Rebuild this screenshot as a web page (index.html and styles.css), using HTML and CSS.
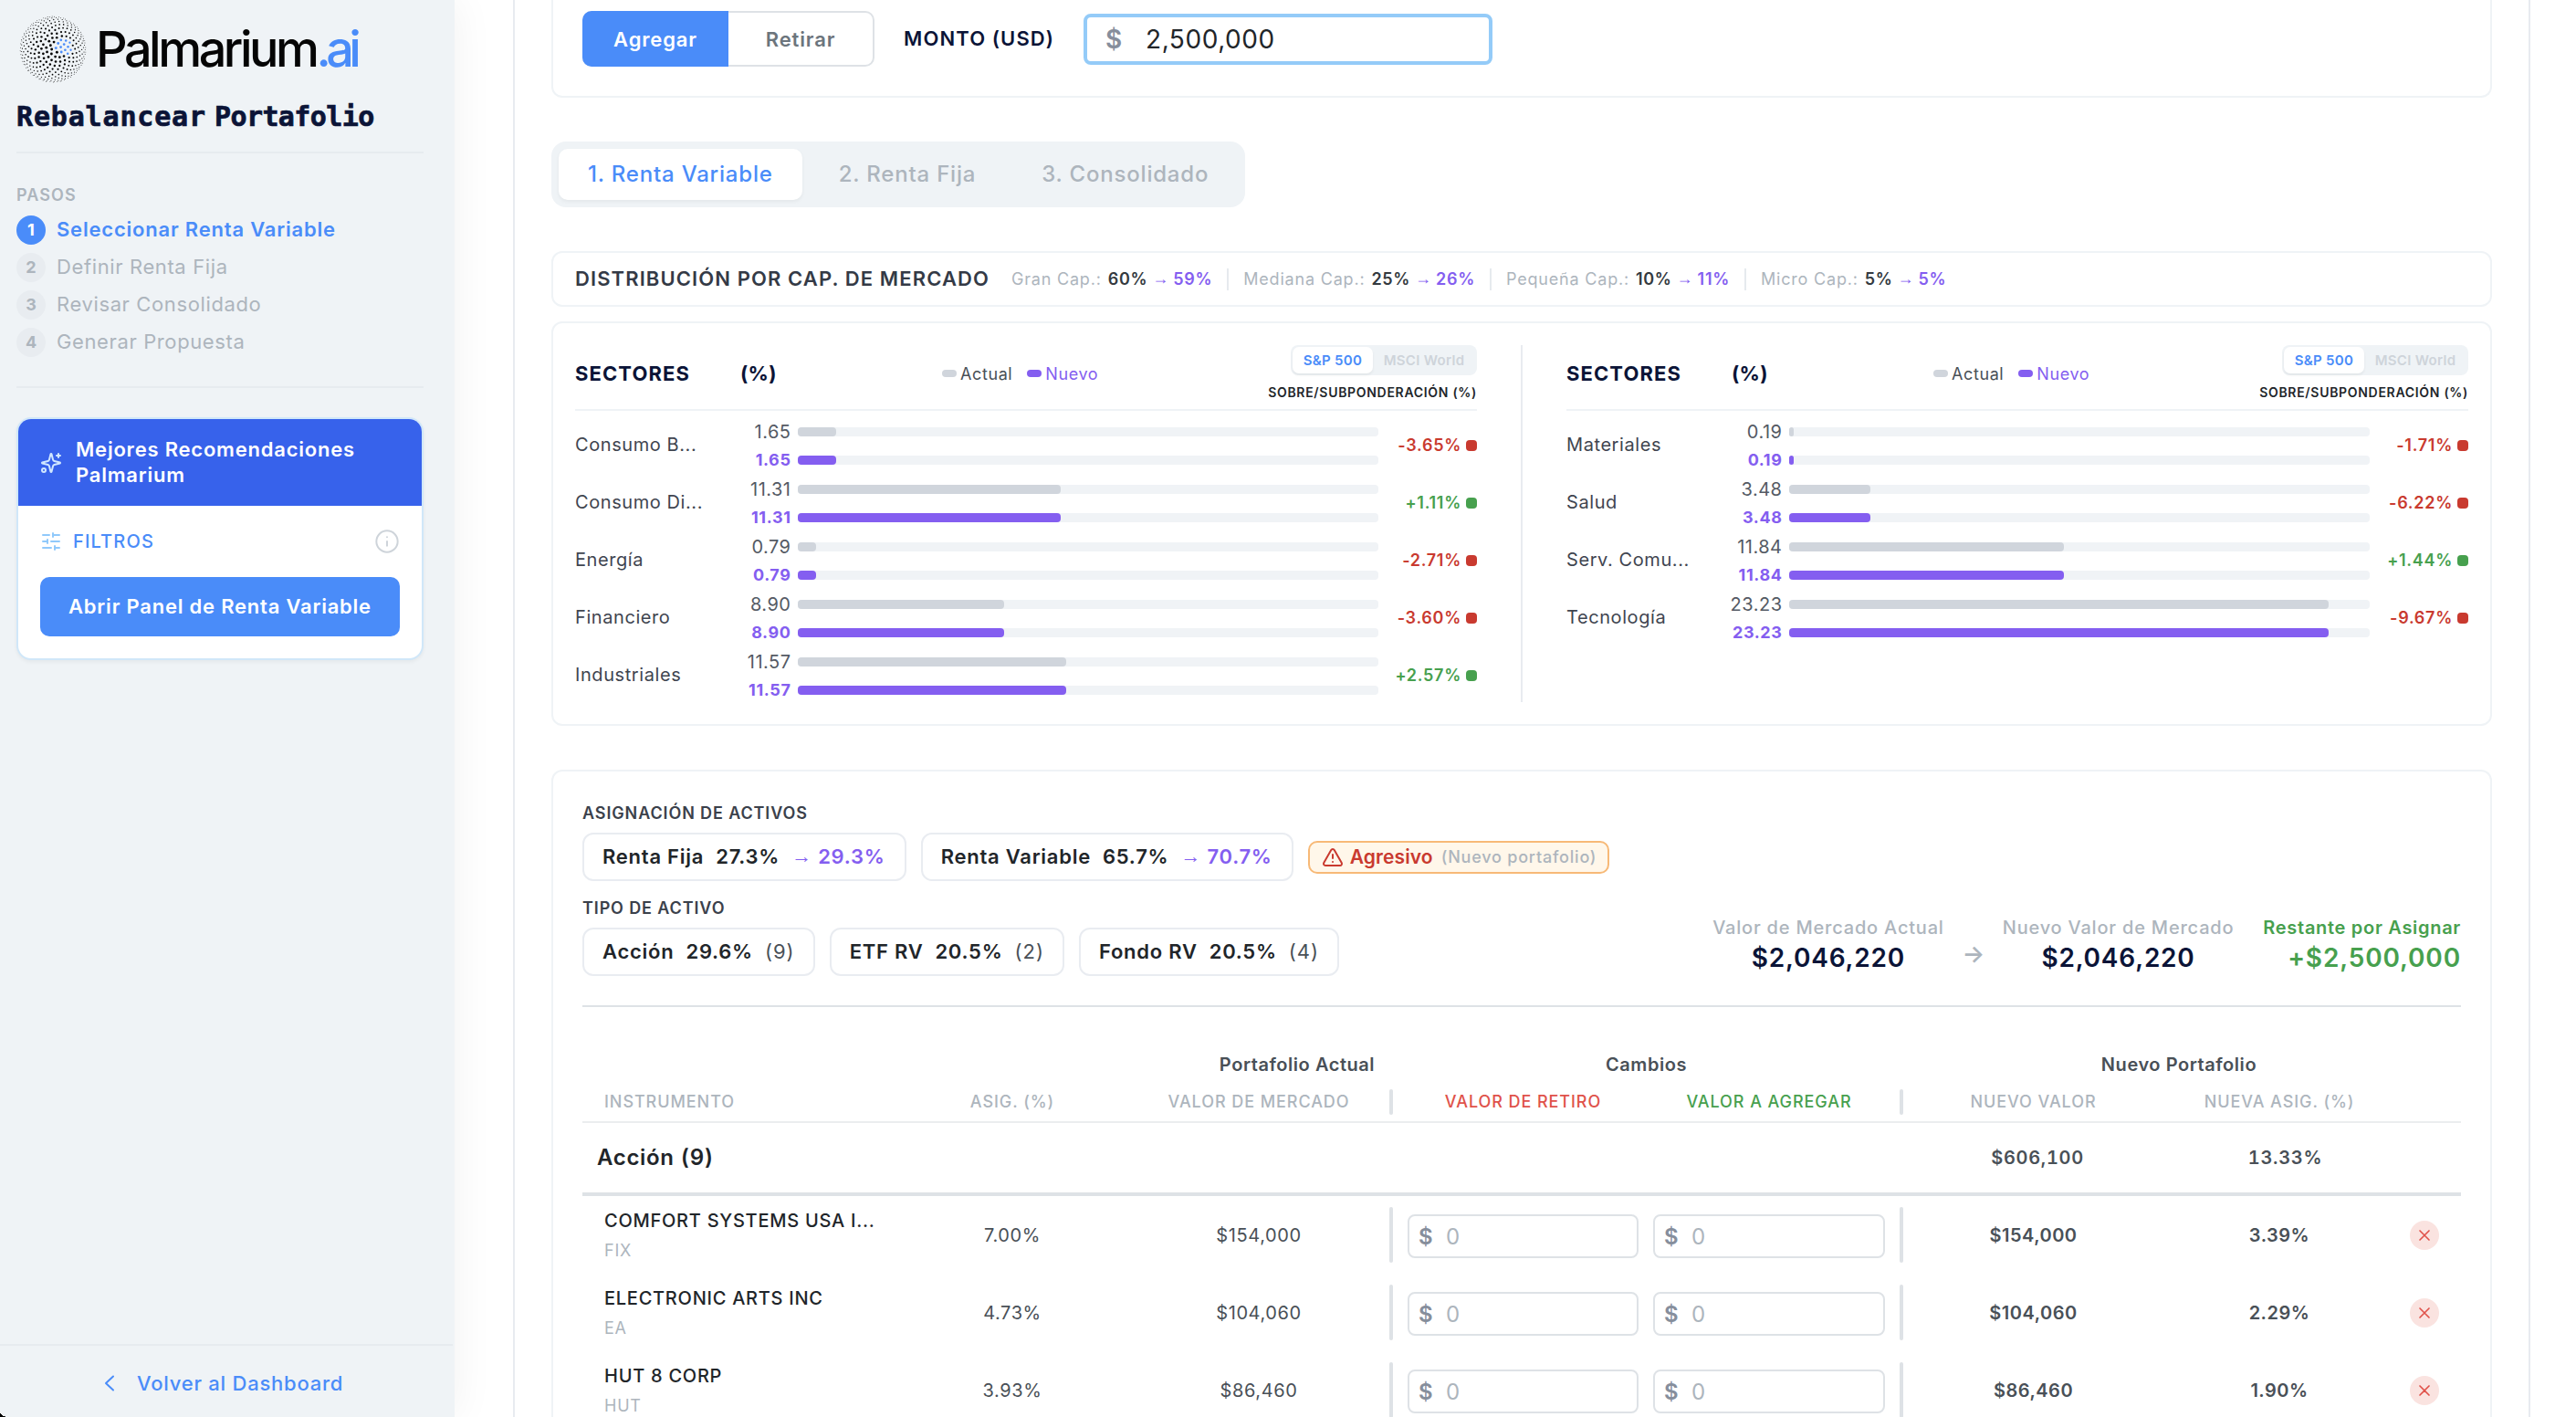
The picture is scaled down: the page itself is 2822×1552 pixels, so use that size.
FILE: index.html
```html
<!DOCTYPE html>
<html lang="es">
<head>
<meta charset="utf-8">
<title>Rebalancear Portafolio</title>
<link rel="stylesheet" href="styles.css">
</head>
<body>
<svg class="sprite" aria-hidden="true">
  <symbol id="i-x" viewBox="0 0 24 24"><path d="M18 6 6 18M6 6l12 12"/></symbol>
</svg>
<div class="app">
  <aside class="sidebar">
    <div class="logo">
      <svg id="sphere" class="sphere" viewBox="-37 -37 74 74"></svg>
      <span class="brand">Palmarium<span class="brand-ai">.ai</span></span>
    </div>
    <h1 class="title"><span class="w1">Rebalancear</span><span class="w2">Portafolio</span></h1>
    <section class="steps">
      <h2 class="steps-title">PASOS</h2>
      <div class="step active"><span class="num">1</span>Seleccionar Renta Variable</div>
      <div class="step"><span class="num">2</span>Definir Renta Fija</div>
      <div class="step"><span class="num">3</span>Revisar Consolidado</div>
      <div class="step"><span class="num">4</span>Generar Propuesta</div>
    </section>
    <section class="reco">
      <div class="reco-head">
        <svg class="icon" viewBox="0 0 24 24"><path d="M9.937 15.5A2 2 0 0 0 8.5 14.063l-6.135-1.582a.5.5 0 0 1 0-.962L8.5 9.936A2 2 0 0 0 9.937 8.5l1.582-6.135a.5.5 0 0 1 .963 0L14.063 8.5A2 2 0 0 0 15.5 9.937l6.135 1.581a.5.5 0 0 1 0 .964L15.5 14.063a2 2 0 0 0-1.437 1.437l-1.582 6.135a.5.5 0 0 1-.963 0z"/><path d="M20 2v4M22 4h-4"/><circle cx="4" cy="20" r="2"/></svg>
        <span>Mejores Recomendaciones<br>Palmarium</span>
      </div>
      <div class="reco-body">
        <div class="filters">
          <svg class="icon" viewBox="0 0 24 24"><path d="M10 5H3M12 19H3M14 3v4M16 17v4M21 12h-9M21 19h-5M21 5h-7M8 10v4M8 12H3"/></svg>
          <span>FILTROS</span>
          <svg class="info" viewBox="0 0 24 24"><circle cx="12" cy="12" r="10"/><path d="M12 16v-4M12 8h.01"/></svg>
        </div>
        <button class="open">Abrir Panel de Renta Variable</button>
      </div>
    </section>
    <footer class="back">
      <svg class="chev" viewBox="0 0 12 18"><path d="M10 1.5 2 9l8 7.5"/></svg>
      <span>Volver al Dashboard</span>
    </footer>
  </aside>

  <main class="main">
    <section class="card amount">
      <div class="switch"><button class="on">Agregar</button><button>Retirar</button></div>
      <label class="amount-label">MONTO (USD)</label>
      <div class="amount-input"><span class="cur">$</span><span>2,500,000</span></div>
    </section>

    <nav class="tabs">
      <div class="tab on">1. Renta Variable</div>
      <div class="tab">2. Renta Fija</div>
      <div class="tab">3. Consolidado</div>
    </nav>

    <section class="card caps">
      <h3>DISTRIBUCIÓN POR CAP. DE MERCADO</h3>
      <div class="cap"><span>Gran Cap.:</span><b>60%</b><i class="arr">→</i><i>59%</i></div>
      <div class="cap"><span>Mediana Cap.:</span><b>25%</b><i class="arr">→</i><i>26%</i></div>
      <div class="cap"><span>Pequeña Cap.:</span><b>10%</b><i class="arr">→</i><i>11%</i></div>
      <div class="cap"><span>Micro Cap.:</span><b>5%</b><i class="arr">→</i><i>5%</i></div>
    </section>

    <section class="card sectors">
      <div class="sector-col">
        <header class="sector-head">
          <h3>SECTORES</h3><h3>(%)</h3>
          <div class="legend"><span class="pill"></span><span>Actual</span><span class="pill new"></span><span class="new-text">Nuevo</span></div>
          <div class="bench"><div class="bench-switch"><span class="on">S&amp;P 500</span><span>MSCI World</span></div><p>SOBRE/SUBPONDERACIÓN (%)</p></div>
        </header>
        <div class="rows">
          <div class="row"><span class="name">Consumo B...</span><div class="nums"><span>1.65</span><b>1.65</b></div><div class="bars"><div class="bar"><div style="width:6.6%"></div></div><div class="bar new"><div style="width:6.6%"></div></div></div><span class="diff neg">-3.65%</span></div>
          <div class="row"><span class="name">Consumo Di...</span><div class="nums"><span>11.31</span><b>11.31</b></div><div class="bars"><div class="bar"><div style="width:45.24%"></div></div><div class="bar new"><div style="width:45.24%"></div></div></div><span class="diff pos">+1.11%</span></div>
          <div class="row"><span class="name">Energía</span><div class="nums"><span>0.79</span><b>0.79</b></div><div class="bars"><div class="bar"><div style="width:3.16%"></div></div><div class="bar new"><div style="width:3.16%"></div></div></div><span class="diff neg">-2.71%</span></div>
          <div class="row"><span class="name">Financiero</span><div class="nums"><span>8.90</span><b>8.90</b></div><div class="bars"><div class="bar"><div style="width:35.6%"></div></div><div class="bar new"><div style="width:35.6%"></div></div></div><span class="diff neg">-3.60%</span></div>
          <div class="row"><span class="name">Industriales</span><div class="nums"><span>11.57</span><b>11.57</b></div><div class="bars"><div class="bar"><div style="width:46.28%"></div></div><div class="bar new"><div style="width:46.28%"></div></div></div><span class="diff pos">+2.57%</span></div>
        </div>
      </div>
      <div class="sector-sep"></div>
      <div class="sector-col">
        <header class="sector-head">
          <h3>SECTORES</h3><h3>(%)</h3>
          <div class="legend"><span class="pill"></span><span>Actual</span><span class="pill new"></span><span class="new-text">Nuevo</span></div>
          <div class="bench"><div class="bench-switch"><span class="on">S&amp;P 500</span><span>MSCI World</span></div><p>SOBRE/SUBPONDERACIÓN (%)</p></div>
        </header>
        <div class="rows">
          <div class="row"><span class="name">Materiales</span><div class="nums"><span>0.19</span><b>0.19</b></div><div class="bars"><div class="bar"><div style="width:0.76%"></div></div><div class="bar new"><div style="width:0.76%"></div></div></div><span class="diff neg">-1.71%</span></div>
          <div class="row"><span class="name">Salud</span><div class="nums"><span>3.48</span><b>3.48</b></div><div class="bars"><div class="bar"><div style="width:13.92%"></div></div><div class="bar new"><div style="width:13.92%"></div></div></div><span class="diff neg">-6.22%</span></div>
          <div class="row"><span class="name">Serv. Comu...</span><div class="nums"><span>11.84</span><b>11.84</b></div><div class="bars"><div class="bar"><div style="width:47.36%"></div></div><div class="bar new"><div style="width:47.36%"></div></div></div><span class="diff pos">+1.44%</span></div>
          <div class="row"><span class="name">Tecnología</span><div class="nums"><span>23.23</span><b>23.23</b></div><div class="bars"><div class="bar"><div style="width:92.92%"></div></div><div class="bar new"><div style="width:92.92%"></div></div></div><span class="diff neg">-9.67%</span></div>
        </div>
      </div>
    </section>

    <section class="card assets">
      <div class="summary">
        <div class="alloc">
          <h4>ASIGNACIÓN DE ACTIVOS</h4>
          <div class="chips">
            <div class="chip"><span>Renta Fija</span><span>27.3%</span><i><em class="arr">→</em>29.3%</i></div>
            <div class="chip"><span>Renta Variable</span><span>65.7%</span><i><em class="arr">→</em>70.7%</i></div>
            <div class="badge"><svg viewBox="0 0 24 24"><path d="m21.73 18-8-14a2 2 0 0 0-3.48 0l-8 14A2 2 0 0 0 4 21h16a2 2 0 0 0 1.73-3M12 9v4M12 17h.01"/></svg><b>Agresivo</b><span>(Nuevo portafolio)</span></div>
          </div>
          <h4 class="second">TIPO DE ACTIVO</h4>
          <div class="chips">
            <div class="chip"><span>Acción</span><span>29.6%</span><u>(9)</u></div>
            <div class="chip"><span>ETF RV</span><span>20.5%</span><u>(2)</u></div>
            <div class="chip"><span>Fondo RV</span><span>20.5%</span><u>(4)</u></div>
          </div>
        </div>
        <div class="stats">
          <div class="stat"><span>Valor de Mercado Actual</span><b>$2,046,220</b></div>
          <div class="stat-arrow">→</div>
          <div class="stat"><span>Nuevo Valor de Mercado</span><b>$2,046,220</b></div>
          <div class="stat left"><span>Restante por Asignar</span><b>+$2,500,000</b></div>
        </div>
      </div>

      <div class="grid groups"><span class="g1">Portafolio Actual</span><span class="g2">Cambios</span><span class="g3">Nuevo Portafolio</span></div>
      <div class="grid heads">
        <span class="inst">INSTRUMENTO</span><span>ASIG. (%)</span><span>VALOR DE MERCADO</span><s></s>
        <span class="red">VALOR DE RETIRO</span><span class="green">VALOR A AGREGAR</span><s></s><span>NUEVO VALOR</span><span>NUEVA ASIG. (%)</span>
      </div>
      <div class="grid total"><h3>Acción (9)</h3><b class="t1">$606,100</b><b class="t2">13.33%</b></div>
      <div class="grid item">
        <div class="inst"><b>COMFORT SYSTEMS USA I...</b><small>FIX</small></div><span>7.00%</span><span>$154,000</span><s></s>
        <div class="cell"><div class="field"><span class="cur">$</span>0</div></div><div class="cell"><div class="field"><span class="cur">$</span>0</div></div><s></s>
        <b>$154,000</b><b>3.39%</b><button class="del"><svg><use href="#i-x"/></svg></button>
      </div>
      <div class="grid item">
        <div class="inst"><b>ELECTRONIC ARTS INC</b><small>EA</small></div><span>4.73%</span><span>$104,060</span><s></s>
        <div class="cell"><div class="field"><span class="cur">$</span>0</div></div><div class="cell"><div class="field"><span class="cur">$</span>0</div></div><s></s>
        <b>$104,060</b><b>2.29%</b><button class="del"><svg><use href="#i-x"/></svg></button>
      </div>
      <div class="grid item">
        <div class="inst"><b>HUT 8 CORP</b><small>HUT</small></div><span>3.93%</span><span>$86,460</span><s></s>
        <div class="cell"><div class="field"><span class="cur">$</span>0</div></div><div class="cell"><div class="field"><span class="cur">$</span>0</div></div><s></s>
        <b>$86,460</b><b>1.90%</b><button class="del"><svg><use href="#i-x"/></svg></button>
      </div>
    </section>
  </main>
</div>
<div class="corner"></div>
<script src="sphere.js"></script>
</body>
</html>
```
FILE: sphere.js
```js
// Logo mark: golden-angle dots on a tilted sphere, with a blue cluster right of centre.
const svg = document.getElementById('sphere');
const count = 620;
const golden = Math.PI * (3 - Math.sqrt(5));
const tiltX = -0.13;
const tiltY = -0.12;
for (let i = 0; i < count / 2 + 60; i++) {
  const z0 = 1 - (2 * i + 1) / count;
  const r0 = Math.sqrt(1 - z0 * z0);
  const x0 = r0 * Math.cos(i * golden);
  const y0 = r0 * Math.sin(i * golden);
  const x1 = x0 * Math.cos(tiltX) + z0 * Math.sin(tiltX);
  const z1 = z0 * Math.cos(tiltX) - x0 * Math.sin(tiltX);
  const y1 = y0 * Math.cos(tiltY) + z1 * Math.sin(tiltY);
  const z = z1 * Math.cos(tiltY) - y0 * Math.sin(tiltY);
  if (z < 0) continue;
  const x = 36 * x1;
  const y = 36 * y1;
  const dot = document.createElementNS('http://www.w3.org/2000/svg', 'circle');
  dot.setAttribute('cx', x.toFixed(2));
  dot.setAttribute('cy', y.toFixed(2));
  dot.setAttribute('r', (0.45 + 1.0 * z * z).toFixed(2));
  dot.setAttribute('fill', Math.hypot(x - 12, y + 3) < 9.5 ? '#4a8cf9' : '#050505');
  svg.appendChild(dot);
}
```
FILE: styles.css
```css
* { box-sizing: border-box; }
body { margin: 0; height: 1552px; overflow: hidden; background: #fff; color: #212529; font-family: Inter, "Liberation Sans", sans-serif; font-size: 20px; letter-spacing: .6px; }
h1, h2, h3, h4, p { margin: 0; }
button { border: 0; padding: 0; background: none; font: inherit; letter-spacing: inherit; color: inherit; }
i, em { font-style: normal; }
u, s { text-decoration: none; }
svg { fill: none; stroke: currentColor; stroke-width: 2; stroke-linecap: round; stroke-linejoin: round; flex: none; }
.sprite { display: none; }
.app { display: flex; height: 1552px; overflow: hidden; }
.arr { font-family: "Liberation Sans", sans-serif; font-weight: 700; letter-spacing: 0; text-align: center; }

/* Sidebar */
.sidebar { width: 498px; flex: none; background: #eff3f6; box-shadow: 0 0 44px rgba(0, 0, 0, .06); display: flex; flex-direction: column; padding-top: 17px; }
.logo { display: flex; align-items: center; gap: 10px; height: 74px; padding-left: 21px; }
.sphere { width: 74px; height: 74px; stroke: none; }
.brand { font-size: 54px; font-weight: 500; line-height: 74px; letter-spacing: -3.5px; color: #050505; }
.brand-ai { color: #4a8cf9; letter-spacing: -5.6px; }
.title { display: flex; margin: 17px 34px 0 18px; height: 60px; border-bottom: 2px solid #e6ebef; font: 700 30px/40px "DejaVu Sans Mono", monospace; color: #0b1437; -webkit-text-stroke: .7px #0b1437; }
.w1 { letter-spacing: .84px; width: 217px; }
.w2 { letter-spacing: -.6px; }
.steps { margin: 0 34px 0 18px; padding: 34px 0 32px; border-bottom: 2px solid #e6ebef; display: flex; flex-direction: column; gap: 9px; color: #adb5bd; }
.steps-title { font-size: 18px; line-height: 24px; font-weight: 600; letter-spacing: 1.1px; margin-bottom: 1px; }
.step { display: flex; gap: 12px; height: 32px; font-size: 22px; line-height: 30px; letter-spacing: .62px; }
.num { width: 32px; height: 32px; border-radius: 50%; background: #e8ecf0; font-size: 18px; font-weight: 700; line-height: 31px; text-align: center; letter-spacing: 0; }
.step.active { color: #4a8cf9; font-weight: 600; letter-spacing: .8px; }
.step.active .num { background: #4a8cf9; color: #fff; }
.reco { margin: 32px 34px 0 18px; height: 266px; border: 2px solid #d0e7f9; border-radius: 16px; background: #fff; overflow: hidden; box-shadow: 0 2px 4px rgba(0, 0, 0, .05); }
.reco-head { display: flex; align-items: center; gap: 15px; height: 95px; padding: 0 0 2px 24px; background: #3762eb; color: #fff; font-size: 22px; font-weight: 600; line-height: 28px; letter-spacing: .79px; }
.reco-head .icon { color: #d0e7ff; margin-top: 2px; }
.icon { width: 24px; height: 24px; }
.reco-body { padding: 25px 24px 0 24px; }
.filters { display: flex; align-items: center; height: 28px; gap: 12px; color: #4a8cf9; font-weight: 500; letter-spacing: 1.15px; }
.filters .icon { color: #90c9fb; }
.info { width: 28px; height: 28px; margin-left: auto; color: #ced4da; stroke-width: 1.7; }
.open { display: block; width: 394px; height: 65px; margin-top: 25px; padding-bottom: 2px; border-radius: 10px; background: #4a8cf9; color: #fff; font-size: 22px; font-weight: 600; letter-spacing: .78px; }
.back { margin: auto 2px 0 0; height: 80px; border-top: 2px solid #e6ebef; display: flex; align-items: center; gap: 24px; padding: 4px 0 0 114px; color: #4a8cf9; font-size: 22px; font-weight: 500; letter-spacing: .77px; }
.chev { width: 12px; height: 18px; }
.corner { position: absolute; left: 0; bottom: 0; width: 9px; height: 6px; background: radial-gradient(ellipse 9px 6px at 100% 0, transparent 98%, #000 100%); }

/* Main column */
.main { width: 2210px; margin-left: 64px; padding: 0 40px; border: solid #e8ebf0; border-width: 0 2px; display: flex; flex-direction: column; }
.card { flex: none; border: 2px solid #eff3f6; border-radius: 12px; background: #fff; }
.amount { height: 107px; border-top: 0; border-radius: 0 0 12px 12px; padding: 12px 32px 0; display: flex; align-items: flex-start; }
.switch { display: flex; width: 320px; height: 61px; border: 2px solid #dee2e6; border-radius: 10px; font-size: 22px; font-weight: 600; letter-spacing: .85px; color: #6c757d; }
.switch button { flex: 1; }
.switch .on { margin: -2px 0 -2px -2px; border-radius: 10px 0 0 10px; background: #4a8cf9; color: #fff; flex: 0 0 160px; }
.amount-label { width: 197px; margin-left: 32px; font-size: 22px; font-weight: 600; line-height: 60px; letter-spacing: 1.1px; color: #0b1437; }
.amount-input { width: 448px; height: 56px; margin-top: 3px; border: 4px solid #94cbf8; border-radius: 8px; display: flex; align-items: center; padding-left: 20px; font-size: 28px; letter-spacing: .55px; }
.amount-input .cur { width: 44px; }
.cur { color: #868e9c; font-weight: 600; }
.tabs { flex: none; align-self: flex-start; display: flex; gap: 8px; margin: 48px 0; padding: 8px; height: 72px; border-radius: 16px; background: #eff3f6; }
.tab { padding: 0 32px; border-radius: 10px; font-size: 24px; font-weight: 500; line-height: 56px; letter-spacing: .8px; color: #adb5bd; }
.tab.on { background: #fff; color: #4a8cf9; box-shadow: 0 2px 4px rgba(0, 0, 0, .05); }
.caps { height: 61px; padding-left: 24px; display: flex; align-items: center; font-size: 18px; }
.caps h3 { width: 478px; font-size: 22px; font-weight: 600; letter-spacing: 1.1px; line-height: 28px; padding-bottom: 1px; color: #343a46; white-space: nowrap; }
.cap { display: flex; align-items: center; height: 24px; margin-right: 16px; letter-spacing: .8px; color: #adb5bd; }
.cap + .cap { border-left: 2px solid #e6eaee; padding-left: 16px; }
.cap span { margin-right: 7px; }
.cap b { font-weight: 600; color: #343a40; letter-spacing: .7px; }
.cap i { font-weight: 600; color: #845ef0; margin-left: 5px; letter-spacing: .7px; }
.cap .arr { width: 18px; font-size: 18px; font-weight: 700; letter-spacing: 0; }

/* Sectors */
.sectors { height: 443px; margin-top: 16px; padding: 24px; display: flex; }
.sector-col { width: 988px; }
.sector-sep { width: 2px; margin: 0 48px; background: #e8ebf0; }
.sector-head { display: grid; grid-template-columns: 181px 221px auto 1fr; align-items: center; height: 72px; padding-bottom: 8px; border-bottom: 2px solid #eff3f6; }
.sector-head h3 { font-size: 22px; font-weight: 700; letter-spacing: 1.1px; color: #0b1437; }
.sector-head h3 + h3 { letter-spacing: .3px; }
.legend { display: flex; align-items: center; gap: 4px; font-size: 18px; letter-spacing: .6px; color: #495057; }
.pill { width: 16px; height: 8px; border-radius: 4px; background: #d0d5dc; }
.pill.new { margin-left: 12px; background: #845ef0; }
.new-text { color: #845ef0; }
.bench { display: flex; flex-direction: column; align-items: flex-end; gap: 9px; }
.bench-switch { display: flex; width: 204px; height: 33px; padding: 2px; border-radius: 8px; background: #eff3f6; font-size: 15px; font-weight: 600; letter-spacing: .3px; line-height: 29px; text-align: center; color: #ced4da; white-space: nowrap; }
.bench-switch span { flex: 1; }
.bench-switch .on { flex: 0 0 88px; border-radius: 7px; background: #fff; color: #4a8cf9; box-shadow: 0 2px 3px rgba(0, 0, 0, .06); }
.bench p { font-size: 14px; font-weight: 600; line-height: 20px; letter-spacing: .7px; }
.rows { display: flex; flex-direction: column; gap: 6px; padding-top: 10px; }
.row { display: grid; grid-template-columns: 150px 85px 636px 1fr; align-items: center; height: 57px; }
.bars { margin-left: 9px; width: 636px; }
.name { color: #3f4550; letter-spacing: .58px; margin-top: -3px; }
.nums, .bars { display: flex; flex-direction: column; gap: 5px; }
.nums > * { height: 26px; line-height: 25px; text-align: right; color: #545a64; letter-spacing: .5px; margin-right: -1.5px; }
.nums b { font-size: 18px; font-weight: 700; color: #845ef0; letter-spacing: .6px; margin-top: -1px; line-height: 26px; }
.bar { height: 10px; margin: 8px 0; border-radius: 4px; background: #f0f3f6; }
.bar div { height: 10px; border-radius: 4px; background: #d0d5dc; }
.bar.new div { background: #845ef0; }
.diff { display: flex; align-items: center; justify-content: flex-end; gap: 5px; font-size: 18px; font-weight: 600; letter-spacing: .72px; margin-top: -2px; }
.diff::after { content: ""; width: 12px; height: 12px; border-radius: 4px; background: currentColor; }
.neg { color: #c93a2f; }
.pos { color: #47a04e; }

/* Assets */
.assets { flex: 1 1 0; min-height: 0; overflow: hidden; border-bottom: 0; border-radius: 12px 12px 0 0; margin-top: 48px; padding: 33px 32px 0; }
.summary { display: flex; justify-content: space-between; align-items: flex-end; height: 225px; padding-bottom: 32px; border-bottom: 2px solid #dee2e6; }
.alloc h4 { font-size: 18px; font-weight: 600; line-height: 24px; letter-spacing: .88px; margin-bottom: 9px; color: #3b414b; }
.alloc h4.second { margin-top: 18px; }
.chips { display: flex; align-items: center; gap: 16px; }
.chip { display: flex; align-items: center; height: 53px; padding: 0 21px 1px 20px; gap: 13px; border: 2px solid #e9ecf1; border-radius: 12px; font-size: 22px; font-weight: 600; letter-spacing: .75px; }
.chip i { display: flex; gap: 8px; color: #845ef0; }
.chip .arr { width: 21px; }
.chip u { font-weight: 400; color: #495057; letter-spacing: 1px; margin-right: -1px; }
.badge { display: flex; align-items: center; height: 36px; padding: 0 12px 0 13px; border: 2px solid #f7b977; border-radius: 10px; background: #fff7ea; color: #c93a2f; }
.badge svg { width: 24px; height: 24px; margin-right: 7px; }
.badge b { font-weight: 600; font-size: 21px; letter-spacing: .1px; }
.badge span { margin-left: 9px; font-size: 18px; font-weight: 500; letter-spacing: .79px; color: #adb5bd; }
.stats { display: flex; align-items: flex-end; margin-bottom: 2px; }
.stat { display: flex; flex-direction: column; align-items: center; color: #adb5bd; }
.stat span { line-height: 30px; font-weight: 500; letter-spacing: .8px; }
.stat b { line-height: 36px; font-size: 28px; font-weight: 600; letter-spacing: .8px; color: #0b1437; }
.stat-arrow { width: 64px; padding-left: 1px; text-align: center; font-size: 26px; font-weight: 600; line-height: 44px; color: #adb5bd; }
.stat.left { align-items: flex-end; margin-left: 32px; color: #47a04e; }
.stat.left span { font-weight: 600; letter-spacing: .7px; }
.stat.left b { color: #47a04e; letter-spacing: .85px; }

.grid { display: grid; grid-template-columns: 336px 270px 270px 20px 269px 270px 20px 269px 270px 1fr; align-items: center; text-align: center; }
.grid s { justify-self: center; width: 4px; border-radius: 2px; background: #dee2e6; }
.groups { height: 82px; padding-top: 44px; font-weight: 600; color: #495057; letter-spacing: .55px; }
.groups span { line-height: 30px; }
.g1 { grid-column: 3; padding-left: 84px; white-space: nowrap; }
.g2 { grid-column: 5 / 7; }
.g3 { grid-column: 8 / 11; padding-right: 15px; }
.heads { height: 45px; border-bottom: 2px solid #ebedef; font-size: 18px; font-weight: 500; letter-spacing: .93px; color: #adb5bd; }
.heads s { height: 28px; }
.inst { text-align: left; padding-left: 24px; }
.red { color: #e0524a; }
.green { color: #47a04e; }
.total { height: 80px; padding-bottom: 1px; border-bottom: 4px solid #dee2e6; color: #495057; font-variant-numeric: tabular-nums; }
.total h3 { font-size: 24px; font-weight: 600; text-align: left; padding-left: 16px; letter-spacing: .65px; color: #212529; }
.total b { font-weight: 600; letter-spacing: .7px; }
.t1 { grid-column: 8; padding-left: 9px; }
.t2 { grid-column: 9; padding-left: 13px; }
.item { height: 85px; color: #495057; }
.item s { height: 61px; }
.item > b { font-weight: 600; letter-spacing: .5px; }
.item .inst { display: flex; flex-direction: column; gap: 3px; padding-top: 1px; }
.inst b { font-weight: 500; line-height: 30px; letter-spacing: .74px; color: #212529; }
.inst small { font-size: 18px; line-height: 30px; letter-spacing: .77px; color: #adb5bd; }
.cell { padding: 3px 8px 0; }
.field { display: flex; align-items: center; height: 48px; padding-left: 10px; border: 2px solid #dee2e6; border-radius: 8px; font-size: 24px; color: #adb5bd; }
.field .cur { width: 30px; text-align: left; }
.del { width: 32px; height: 32px; margin: 1px 0 0 8px; border-radius: 50%; background: #fae3e0; color: #e0524a; display: flex; align-items: center; justify-content: center; }
.del svg { width: 20px; height: 20px; }
```
